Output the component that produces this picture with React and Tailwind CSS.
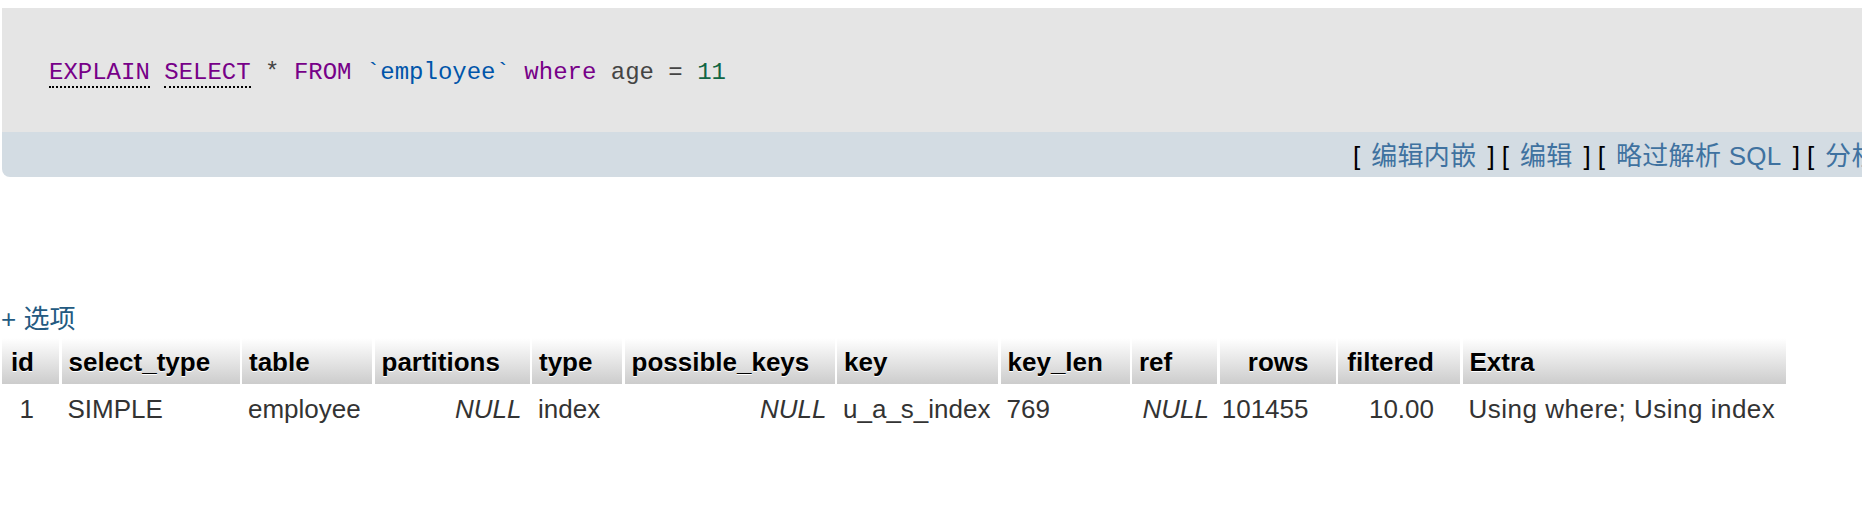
const columns = [
  { name: 'id', align: 'right', pr: 'pr-[25px]' },
  { name: 'select_type' },
  { name: 'table' },
  { name: 'partitions' },
  { name: 'type' },
  { name: 'possible_keys' },
  { name: 'key' },
  { name: 'key_len' },
  { name: 'ref' },
  { name: 'rows', align: 'right', pr: 'pr-[27px]' },
  { name: 'filtered', align: 'right', pr: 'pr-[26px]' },
  { name: 'Extra' },
]

const row = [
  { v: '1' },
  { v: 'SIMPLE' },
  { v: 'employee' },
  { v: 'NULL', isNull: true },
  { v: 'index' },
  { v: 'NULL', isNull: true },
  { v: 'u_a_s_index' },
  { v: '769' },
  { v: 'NULL', isNull: true },
  { v: '101455' },
  { v: '10.00' },
  { v: 'Using where; Using index', wide: true },
]

function SqlLine() {
  return (
    <div className="font-['Liberation_Mono',monospace] text-[24px] leading-[30px] whitespace-pre text-[#444]">
      <span className="text-[#770088] border-b-2 border-dotted border-black">EXPLAIN</span>{' '}
      <span className="text-[#770088] border-b-2 border-dotted border-black">SELECT</span>
      <span> * </span>
      <span className="text-[#770088]">FROM</span>{' '}
      <span className="text-[#0055aa]">`employee`</span>{' '}
      <span className="text-[#770088]">where</span>
      <span> age = </span>
      <span className="text-[#116644]">11</span>
    </div>
  )
}

function Toolbar() {
  const links = ['编辑内嵌', '编辑', '略过解析 SQL', '分析', '创建 PHP 代码', '刷新']
  return (
    <div className="h-[45px] bg-[#d3dce3] rounded-bl-[8px] flex items-center pt-[3px] pl-[1351px] gap-[7px] whitespace-nowrap text-[26px] text-black overflow-hidden">
      {links.map((l) => (
        <span key={l} className="flex items-center">
          [<a className="text-[#3f72a0] mx-[11px] tracking-[0.3px]">{l}</a>]
        </span>
      ))}
    </div>
  )
}

export default function App() {
  return (
    <div className="w-[1862px] h-[510px] overflow-hidden bg-white font-['Liberation_Sans','Noto_Sans_CJK_SC',sans-serif]">
      <div className="pt-[8px] pl-[2px]">
        <div className="w-[2400px]">
          <div className="h-[124px] bg-[#e5e5e5] flex items-center pl-[47px] pt-[5px]">
            <SqlLine />
          </div>
          <Toolbar />
        </div>
      </div>

      <div className="mt-[126px] text-[26px] leading-[32px] text-[#235a81] pl-[1px]">+ 选项</div>

      <div className="mt-[3px] ml-[2px] grid grid-cols-[57px_178px_130px_155px_90px_210px_161px_129px_85px_116px_122px_323px] gap-x-[2.5px] gap-y-[2px] text-[26px]">
        {columns.map((c) => (
          <div
            key={c.name}
            className={`h-[46px] flex items-center pt-[3px] font-bold text-black bg-[linear-gradient(#fff,#ccc)] [text-shadow:0_1px_0_#fff] ${
              c.align === 'right' ? `justify-end pl-[7px] ${c.pr}` : 'px-[7px]'
            }`}
          >
            {c.name}
          </div>
        ))}
        {row.map((cell, i) => {
          const col = columns[i]
          const right = col.align === 'right'
          return (
            <div
              key={i}
              className={`h-[46px] flex items-center text-[#333] whitespace-nowrap ${
                cell.wide ? 'tracking-[0.5px]' : ''
              } ${right ? `justify-end pl-[2px] ${col.pr}` : cell.isNull ? 'justify-end px-[8px]' : 'px-[6px]'}`}
            >
              {cell.isNull ? <i>{cell.v}</i> : cell.v}
            </div>
          )
        })}
      </div>
    </div>
  )
}
